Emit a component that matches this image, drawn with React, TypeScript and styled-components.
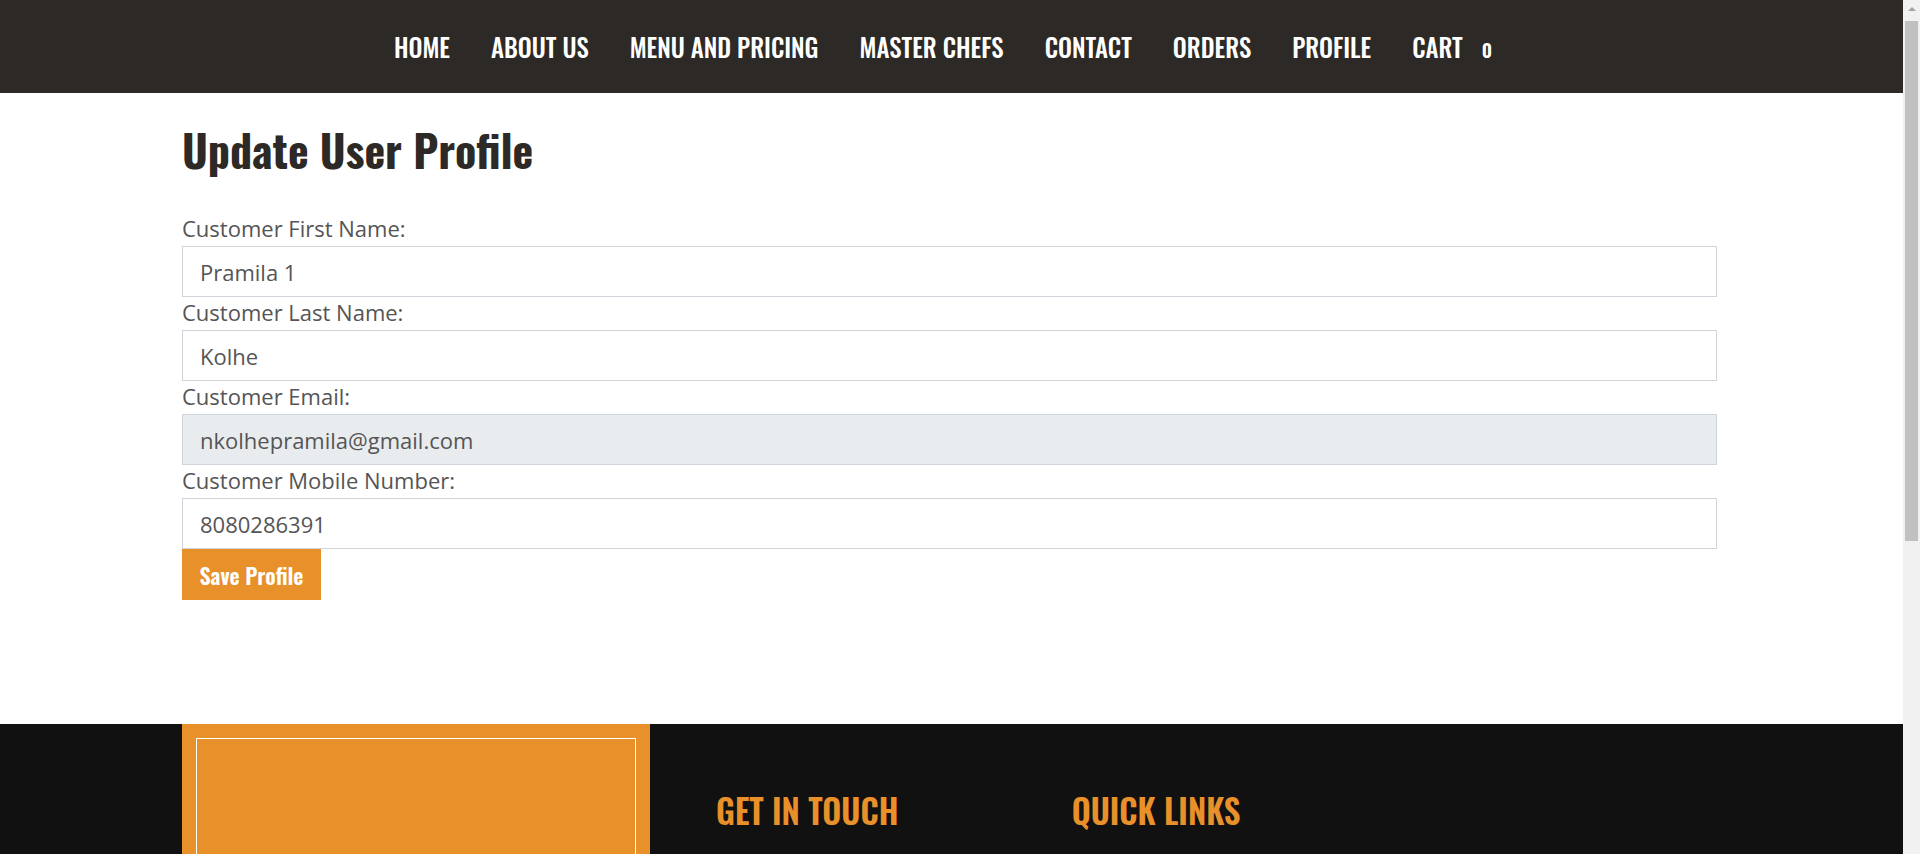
import React from "react";
import styled, { createGlobalStyle } from "styled-components";

const display = `"Oswald", "Roboto Condensed", "Liberation Sans", sans-serif`;

const GlobalStyle = createGlobalStyle`
  html, body { margin: 0; padding: 0; }
  body {
    font-family: "Open Sans", "Liberation Sans", Arial, sans-serif;
    background: #ffffff;
    color: #555555;
  }
  *, *::before, *::after { box-sizing: border-box; }
`;

const Shell = styled.div`
  display: flex;
  align-items: stretch;
`;

const Page = styled.div`
  flex: 1;
  min-width: 0;
`;

const ScrollRail = styled.div`
  width: 17px;
  flex: none;
  background: #f1f1f1;
  display: flex;
  flex-direction: column;
  align-items: center;
`;

const ScrollArrow = styled.div`
  width: 0;
  height: 0;
  margin-top: 7px;
  border-left: 4px solid transparent;
  border-right: 4px solid transparent;
  border-bottom: 4px solid #a3a3a3;
`;

const ScrollThumb = styled.div`
  width: 13px;
  height: 520px;
  margin-top: 10px;
  background: #c1c1c1;
`;

const NavBar = styled.header`
  background: #2d2926;
  height: 93px;
  padding-right: 17px;
  display: flex;
  justify-content: center;
  align-items: center;
`;

const NavList = styled.ul`
  list-style: none;
  margin: 0;
  padding: 0;
  display: flex;
  align-items: baseline;
  gap: 41px;
`;

const NavLink = styled.a`
  font-family: ${display};
  font-weight: 500;
  font-size: 24.8px;
  color: #ffffff;
  text-transform: uppercase;
  text-decoration: none;
`;

const CartCount = styled.span`
  font-size: 19px;
  font-weight: 600;
  margin-left: 19px;
`;

const Container = styled.div`
  width: 1539px;
  margin: 0 auto;
  padding-right: 4px;
`;

const Main = styled.main`
  padding: 28px 0 124px;
`;

const Title = styled.h1`
  font-family: ${display};
  font-weight: 700;
  font-size: 44px;
  line-height: 58px;
  color: #2d2926;
  margin: 0 0 34px;
`;

const Field = styled.div`
  display: flex;
  flex-direction: column;
`;

const Label = styled.label`
  display: block;
  font-size: 22px;
  line-height: 31px;
  margin-bottom: 2px;
  color: #555555;
`;

const Input = styled.input<{ $disabled?: boolean }>`
  display: block;
  width: 100%;
  height: 51px;
  padding: 0 17px;
  border: 1px solid #ced4da;
  border-radius: 0;
  background: ${(p) => (p.$disabled ? "#e9ecef" : "#ffffff")};
  font-family: "Open Sans", "Liberation Sans", Arial, sans-serif;
  font-size: 22px;
  color: #555555;
  outline: none;
`;

const SaveButton = styled.button`
  display: block;
  height: 51px;
  width: 139px;
  padding: 0;
  border: none;
  border-radius: 0;
  background: #e8902a;
  color: #ffffff;
  font-family: ${display};
  font-weight: 600;
  font-size: 22px;
  cursor: pointer;
`;

const Footer = styled.footer`
  background: #111111;
`;

const FooterGrid = styled.div`
  display: grid;
  grid-template-columns: 468px repeat(3, 1fr);
  min-height: 636px;
`;

const BrandBox = styled.div`
  background: #e8902a;
  padding: 14px;
`;

const BrandInner = styled.div`
  height: 100%;
  border: 1px solid #ffffff;
  display: flex;
  flex-direction: column;
  justify-content: flex-end;
  align-items: center;
  padding: 40px 30px;
  color: #ffffff;
  text-align: center;
`;

const BrandText = styled.p`
  margin: 0;
  font-size: 16px;
  line-height: 1.6;
`;

const FooterCol = styled.div`
  padding: 66px 20px 0 66px;
`;

const FooterTitle = styled.h3`
  font-family: ${display};
  font-weight: 600;
  font-size: 33px;
  line-height: 42px;
  color: #e8902a;
  text-transform: uppercase;
  margin: 0 0 28px;
`;

const FooterList = styled.ul`
  list-style: none;
  margin: 0;
  padding: 0;
  display: flex;
  flex-direction: column;
  gap: 10px;
`;

const FooterItem = styled.li`
  color: #bbbbbb;
  font-size: 16px;
`;

const navItems = ["Home", "About Us", "Menu and Pricing", "Master Chefs", "Contact", "Orders", "Profile"];

const fields = [
  { label: "Customer First Name:", value: "Pramila 1", disabled: false },
  { label: "Customer Last Name:", value: "Kolhe", disabled: false },
  { label: "Customer Email:", value: "nkolhepramila@gmail.com", disabled: true },
  { label: "Customer Mobile Number:", value: "8080286391", disabled: false },
];

export default function App() {
  return (
    <Shell>
      <GlobalStyle />
      <Page>
        <NavBar>
          <NavList>
            {navItems.map((item) => (
              <li key={item}>
                <NavLink href="#">{item}</NavLink>
              </li>
            ))}
            <li>
              <NavLink href="#">
                Cart<CartCount>0</CartCount>
              </NavLink>
            </li>
          </NavList>
        </NavBar>
        <Main>
          <Container>
            <Title>Update User Profile</Title>
            <form onSubmit={(e) => e.preventDefault()}>
              {fields.map((f, i) => (
                <Field key={f.label}>
                  <Label htmlFor={`field-${i}`}>{f.label}</Label>
                  <Input
                    id={`field-${i}`}
                    defaultValue={f.value}
                    readOnly={f.disabled}
                    $disabled={f.disabled}
                  />
                </Field>
              ))}
              <SaveButton type="submit">Save Profile</SaveButton>
            </form>
          </Container>
        </Main>
        <Footer>
          <Container>
            <FooterGrid>
              <BrandBox>
                <BrandInner>
                  <BrandText>Open daily, 10:00 AM – 11:00 PM</BrandText>
                </BrandInner>
              </BrandBox>
              <FooterCol>
                <FooterTitle>Get In Touch</FooterTitle>
                <FooterList>
                  <FooterItem>Pune, Maharashtra</FooterItem>
                  <FooterItem>+91 8080286391</FooterItem>
                  <FooterItem>info@example.com</FooterItem>
                </FooterList>
              </FooterCol>
              <FooterCol>
                <FooterTitle>Quick Links</FooterTitle>
                <FooterList>
                  <FooterItem>Home</FooterItem>
                  <FooterItem>About Us</FooterItem>
                  <FooterItem>Menu and Pricing</FooterItem>
                  <FooterItem>Contact</FooterItem>
                </FooterList>
              </FooterCol>
              <FooterCol />
            </FooterGrid>
          </Container>
        </Footer>
      </Page>
      <ScrollRail aria-hidden="true">
        <ScrollArrow />
        <ScrollThumb />
      </ScrollRail>
    </Shell>
  );
}
